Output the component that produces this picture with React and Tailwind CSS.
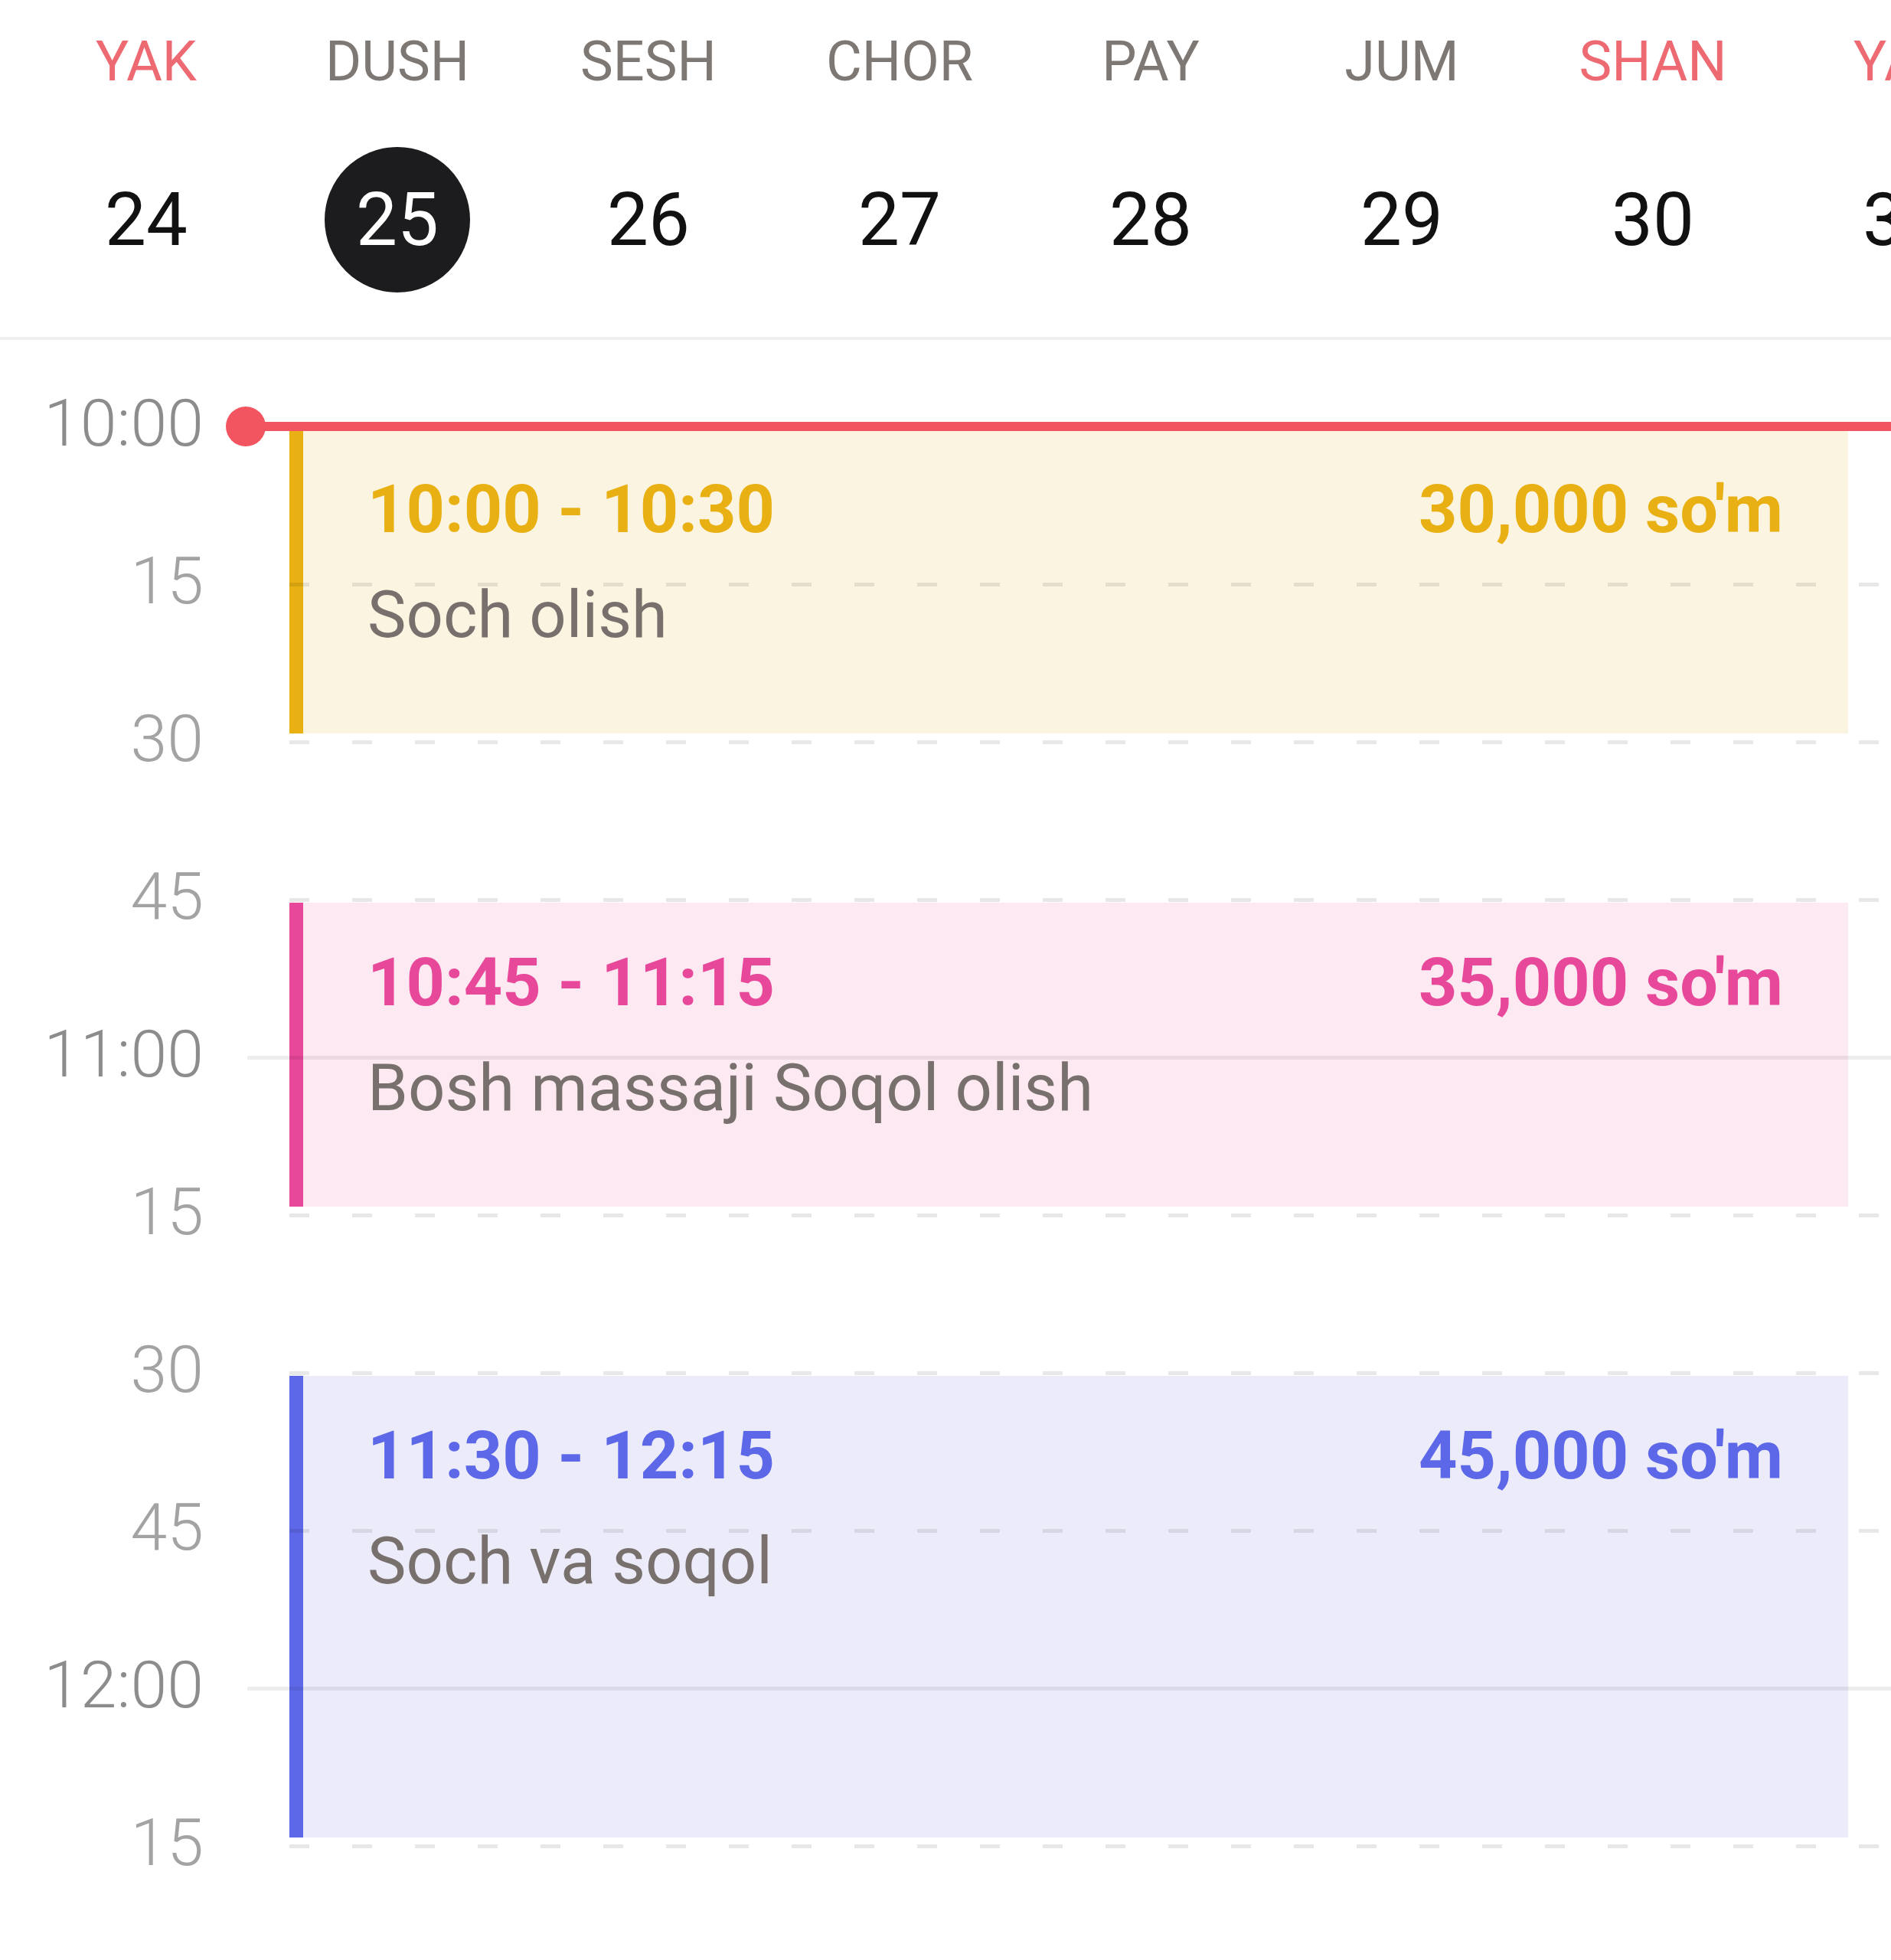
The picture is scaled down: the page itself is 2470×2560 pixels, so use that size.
import React from 'react'

const DAYS = [
  { label: 'YAK', date: 24, weekend: true },
  { label: 'DUSH', date: 25, active: true },
  { label: 'SESH', date: 26 },
  { label: 'CHOR', date: 27 },
  { label: 'PAY', date: 28 },
  { label: 'JUM', date: 29 },
  { label: 'SHAN', date: 30, weekend: true },
  { label: 'YAK', date: 31, weekend: true },
]

const SLOTS = ['10:00', '15', '30', '45', '11:00', '15', '30', '45', '12:00', '15']

const ROW = 206
const FIRST_LINE = 113

const EVENTS = [
  {
    start: 0, span: 2, time: '10:00 - 10:30', price: "30,000 so'm", name: 'Soch olish',
    bar: 'bg-[#e8b012]', bg: 'bg-[#fbf4e1]', text: 'text-[#e8b012]',
  },
  {
    start: 3, span: 2, time: '10:45 - 11:15', price: "35,000 so'm", name: 'Bosh massaji Soqol olish',
    bar: 'bg-[#e8489a]', bg: 'bg-[#fde9f2]', text: 'text-[#e8489a]',
  },
  {
    start: 6, span: 3, time: '11:30 - 12:15', price: "45,000 so'm", name: 'Soch va soqol',
    bar: 'bg-[#5d68e8]', bg: 'bg-[#ecebfa]', text: 'text-[#5d68e8]',
  },
]

function DayColumn({ day }) {
  return (
    <div className="w-[328px] shrink-0 flex flex-col items-center pt-[45px]">
      <span className={`text-[72px] leading-none ${day.weekend ? 'text-[#ee6a72]' : 'text-[#7e7874]'}`}>
        {day.label}
      </span>
      <div className={`mt-[75px] w-[190px] h-[190px] rounded-full flex items-center justify-center text-[96px] leading-none ${
        day.active ? 'bg-[#1c1c1e] text-white' : 'text-[#111111]'
      }`}>
        {day.date}
      </div>
    </div>
  )
}

function SlotRow({ label }) {
  const isHour = label.includes(':')
  return (
    <div className="relative z-10 h-[206px] flex items-center">
      <span className={`w-[266px] shrink-0 pb-[8px] text-right text-[86px] leading-none font-light ${
        isHour ? 'text-[#8c8c8c]' : 'text-[#a3a3a3]'
      }`}>
        {label}
      </span>
      {isHour ? (
        <div className="ml-[57px] flex-1 h-[5px] bg-black/[0.07]" />
      ) : (
        <div className="ml-[112px] flex-1 h-[5px] bg-[repeating-linear-gradient(90deg,rgba(0,0,0,0.09)_0_26px,transparent_26px_82px)]" />
      )}
    </div>
  )
}

function EventCard({ ev }) {
  return (
    <div
      className={`absolute left-[378px] w-[2036px] flex ${ev.bg}`}
      style={{ top: FIRST_LINE + ev.start * ROW + 4, height: ev.span * ROW - 15 }}
    >
      <div className={`w-[18px] h-full shrink-0 ${ev.bar}`} />
      <div className="flex-1 pl-[84px] pr-[85px] pt-[60px]">
        <div className={`flex items-start justify-between text-[88px] leading-none font-bold ${ev.text}`}>
          <span>{ev.time}</span>
          <span>{ev.price}</span>
        </div>
        <div className="mt-[52px] text-[85px] leading-none text-[#78706c]">{ev.name}</div>
      </div>
    </div>
  )
}

export default function App() {
  return (
    <div className="w-[2470px] h-[2560px] overflow-hidden bg-white font-['Roboto',sans-serif]">
      <div className="h-[444px] border-b-4 border-[#efefef] flex pl-[27px] overflow-hidden">
        {DAYS.map((d, i) => <DayColumn key={i} day={d} />)}
      </div>

      <div className="relative pt-[10px]">
        {EVENTS.map((ev, i) => <EventCard key={i} ev={ev} />)}

        {SLOTS.map((s, i) => <SlotRow key={i} label={s} />)}

        {/* current time marker */}
        <div className="absolute z-20 left-[295px] top-[87px] w-[52px] h-[52px] rounded-full bg-[#f2555f]" />
        <div className="absolute z-20 left-[321px] right-0 top-[107px] h-[12px] bg-[#f2555f]" />
      </div>
    </div>
  )
}
